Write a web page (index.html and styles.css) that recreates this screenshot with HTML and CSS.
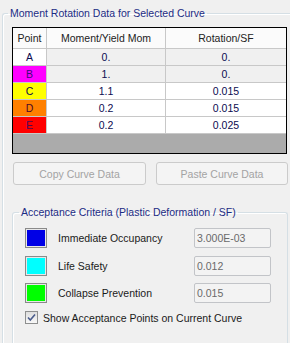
FILE: index.html
```html
<!DOCTYPE html>
<html>
<head>
<meta charset="utf-8">
<link rel="stylesheet" href="styles.css">
</head>
<body>
<fieldset class="group outer">
  <legend class="legend">Moment Rotation Data for Selected Curve</legend>
  <div class="grid">
    <div class="row head"><div class="c">Point</div><div class="c">Moment/Yield Mom</div><div class="c">Rotation/SF</div></div>
    <div class="row ro"><div class="c pt pa">A</div><div class="c">0.</div><div class="c">0.</div></div>
    <div class="row ro"><div class="c pt pb">B</div><div class="c">1.</div><div class="c">0.</div></div>
    <div class="row"><div class="c pt pc">C</div><div class="c">1.1</div><div class="c">0.015</div></div>
    <div class="row"><div class="c pt pd">D</div><div class="c">0.2</div><div class="c">0.015</div></div>
    <div class="row"><div class="c pt pe">E</div><div class="c">0.2</div><div class="c">0.025</div></div>
  </div>
  <div class="btns">
    <button class="btn" disabled>Copy Curve Data</button>
    <button class="btn btn2" disabled>Paste Curve Data</button>
  </div>
  <fieldset class="group accept">
    <legend class="legend">Acceptance Criteria (Plastic Deformation / SF)</legend>
    <div class="crit"><span class="sw blue"></span><span class="lbl">Immediate Occupancy</span><span class="tb">3.000E-03</span></div>
    <div class="crit"><span class="sw cyan"></span><span class="lbl">Life Safety</span><span class="tb">0.012</span></div>
    <div class="crit"><span class="sw green"></span><span class="lbl">Collapse Prevention</span><span class="tb">0.015</span></div>
    <div class="chk">
      <span class="box"><svg width="11" height="11" viewBox="0 0 11 11"><path d="M2 5.5 L4.3 8 L9 2.5" fill="none" stroke="#4a5c8c" stroke-width="1.6"/></svg></span>
      <span>Show Acceptance Points on Current Curve</span>
    </div>
  </fieldset>
</fieldset>
</body>
</html>
```
FILE: styles.css
```css
html, body {
  margin: 0;
  padding: 0;
}
body {
  background: #f0f0f0;
  font-family: "Liberation Sans", Arial, sans-serif;
  font-size: 10.5px;
  width: 290px;
  height: 343px;
  overflow: hidden;
  color: #1a1a1a;
}
.group {
  border: 1px solid #d5dfe5;
  border-radius: 3px;
  box-shadow: inset 1px 1px 0 #fff;
  margin: 0;
  min-width: 0;
}
.legend {
  line-height: 12px;
  padding: 0 2px;
  color: #1c2c84;
}
.outer {
  margin: 7px 0 0 2px;
  padding: 8px 0 0 9px;
  box-sizing: border-box;
  width: 288px;
  height: 336px;
  border-right: 0;
  border-bottom: 0;
  border-radius: 3px 0 0 0;
}
.outer > .legend {
  margin-left: -4px;
}
.grid {
  width: 275px;
  height: 127px;
  box-sizing: border-box;
  border: 1px solid #000;
  background: #ababab;
}
.row {
  display: grid;
  grid-template-columns: 34px 119px 120px;
  height: 17px;
}
.c {
  box-sizing: border-box;
  border-right: 1px solid #c8c8c8;
  border-bottom: 1px solid #c8c8c8;
  text-align: center;
  line-height: 16px;
  color: #0c0c50;
  background: #fff;
}
.c:last-child {
  border-right: 0;
}
.head {
  height: 21px;
}
.head .c {
  line-height: 20px;
  background: #fbfbfb;
  color: #222;
}
.ro .c {
  background: #f0f0f0;
}
.ro .pa { background: #fff; }
.row .pb { background: #ff00ff; color: #3a0a7a; }
.row .pc { background: #ffff00; }
.row .pd { background: #ff8000; color: #4a0a2a; }
.row .pe { background: #ff0000; color: #4a0a5a; }
.btns {
  display: flex;
  gap: 10px;
  margin: 8px 0 0 1px;
}
.btn {
  width: 133px;
  height: 23px;
  box-sizing: border-box;
  border: 1px solid #cbcbcb;
  border-radius: 3px;
  background: #f4f4f4;
  color: #a3a3a3;
  font: inherit;
  padding: 0;
}
.btn2 {
  width: 132px;
}
.accept {
  margin: 21px 0 0 0;
  padding: 10px 0 0 12px;
  width: 276px;
  box-sizing: border-box;
  height: 140px;
  border-bottom: 0;
  border-radius: 3px 3px 0 0;
}
.accept > .legend {
  margin-left: -6px;
}
.crit {
  display: flex;
  align-items: center;
  height: 20px;
  margin-bottom: 7.5px;
}
.sw {
  width: 22px;
  height: 20px;
  box-sizing: border-box;
  border: 1px solid #8a8a8a;
  box-shadow: inset 0 0 0 1px #e8e8e8;
  flex: none;
}
.blue { background: #0000e6; }
.cyan { background: #00ffff; }
.green { background: #00ff00; }
.lbl {
  margin-left: 11px;
  width: 136px;
}
.tb {
  width: 77px;
  height: 20px;
  box-sizing: border-box;
  border: 1px solid #c2c4c8;
  border-radius: 2px;
  background: #f3f3f3;
  color: #6a6a6a;
  line-height: 18px;
  padding-left: 2px;
}
.chk {
  display: flex;
  align-items: center;
  gap: 5px;
  margin-top: 8px;
}
.box {
  width: 13px;
  height: 13px;
  box-sizing: border-box;
  border: 1px solid #8e8f8f;
  background: linear-gradient(#dedede, #f8f8f8);
  display: flex;
  align-items: center;
  justify-content: center;
}
.box svg { display: block; }
```
